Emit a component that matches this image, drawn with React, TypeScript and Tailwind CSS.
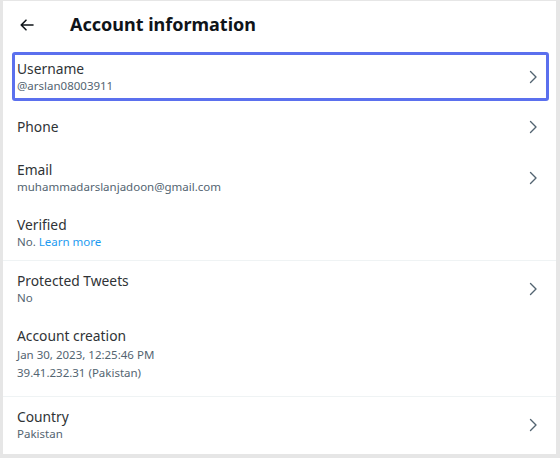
import type { ReactNode } from 'react'

interface Row {
  label: string
  lines?: ReactNode[]
  chevron?: boolean
  divider?: boolean
  pad: string
  tall?: boolean
}

const rows: Row[] = [
  { label: 'Phone', chevron: true, pad: 'h-[52px]' },
  { label: 'Email', lines: ['muhammadarslanjadoon@gmail.com'], chevron: true, pad: 'pt-[8px] pb-[13px]' },
  {
    label: 'Verified',
    lines: [
      <>
        No. <span className="text-[#1d9bf0]">Learn more</span>
      </>,
    ],
    divider: true,
    pad: 'pt-[8px] pb-[10px]',
  },
  { label: 'Protected Tweets', lines: ['No'], chevron: true, pad: 'pt-[11px] pb-[10px]' },
  {
    label: 'Account creation',
    lines: ['Jan 30, 2023, 12:25:46 PM', '39.41.232.31 (Pakistan)'],
    divider: true,
    pad: 'pt-[11px] pb-[14px]',
    tall: true,
  },
  { label: 'Country', lines: ['Pakistan'], chevron: true, pad: 'pt-[11px] pb-[10px]' },
]

function ArrowLeft() {
  return (
    <svg width="14" height="12" viewBox="0 0 14 12" fill="none" stroke="#0f1419" strokeWidth="1.6" strokeLinecap="round" strokeLinejoin="round">
      <path d="M13 6H1.2M6 1.2L1.2 6L6 10.8" />
    </svg>
  )
}

function Chevron() {
  return (
    <svg width="9" height="14" viewBox="0 0 9 14" fill="none" stroke="#536471" strokeWidth="1.4" strokeLinecap="round" strokeLinejoin="round">
      <path d="M1.5 1.5L7 7L1.5 12.5" />
    </svg>
  )
}

function Content({ row }: { row: Row }) {
  return (
    <div className="flex items-center justify-between">
      <div className="flex flex-col">
        <span className="text-[13.8px] leading-[18px] text-[#2f3336]">{row.label}</span>
        {row.lines?.map((line, i) => (
          <span key={i} className={`text-[11.5px] text-[#536471] ${row.tall ? 'leading-[18px]' : 'leading-[16px]'} ${row.tall && i === 0 ? 'pt-[1px]' : ''}`}>
            {line}
          </span>
        ))}
      </div>
      {row.chevron && <Chevron />}
    </div>
  )
}

export default function App() {
  return (
    <div className="w-[560px] h-[458px] bg-[#e6e6e6] pt-[1px] pl-[3px] font-['Noto_Sans',sans-serif]">
      <div className="w-[553px] h-[453px] bg-white flex flex-col">
        <div className="flex items-center h-[51px] pl-[17px] pb-[4px]">
          <ArrowLeft />
          <h1 className="ml-[36px] text-[18px] font-bold text-[#0f1419]">Account information</h1>
        </div>
        <div className="pl-[9px] pr-[7px]">
          <div className="h-[49px] border-[3px] border-[#5b70ee] rounded-[3px] pl-[2px] pr-[8px] pt-[5px]">
            <Content row={{ label: 'Username', lines: ['@arslan08003911'], chevron: true, pad: '' }} />
          </div>
        </div>
        {rows.map((row) => (
          <div key={row.label} className={`pl-[14px] pr-[18px] ${row.pad} ${row.divider ? 'border-b border-[#eff3f4]' : ''} ${row.label === 'Phone' ? 'flex flex-col justify-center' : ''}`}>
            <Content row={row} />
          </div>
        ))}
      </div>
    </div>
  )
}
